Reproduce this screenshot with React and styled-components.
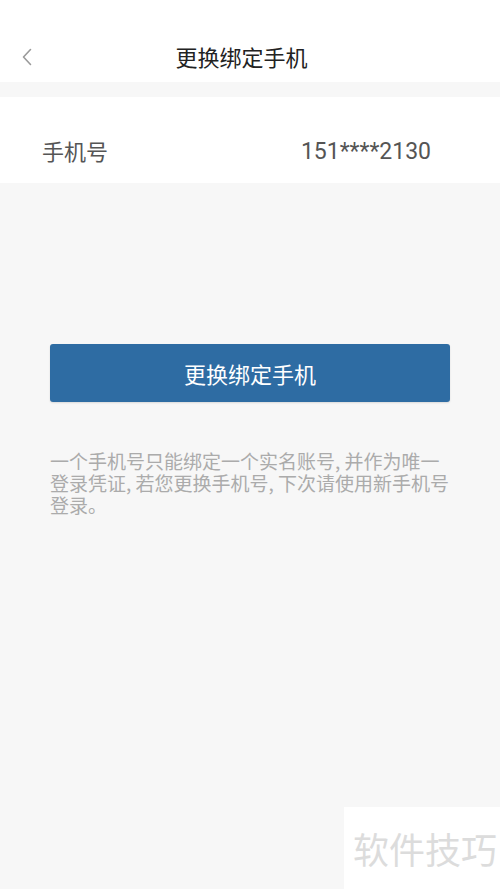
import * as React from 'react';
import styled, { createGlobalStyle } from 'styled-components';

const GlobalStyle = createGlobalStyle`
  html, body {
    margin: 0;
    padding: 0;
    background: #f7f7f7;
  }
  * {
    box-sizing: border-box;
  }
`;

export default function App() {
  return (
    <Page>
      <GlobalStyle />
      <Header>
        <BackButton>
          <svg width="12" height="18" viewBox="0 0 12 18">
            <path d="M9.5 1.5 L2.5 9 L9.5 16.5" fill="none" stroke="#9a9a9a" strokeWidth="1.6" strokeLinecap="round" strokeLinejoin="round" />
          </svg>
        </BackButton>
        <Title>更换绑定手机</Title>
      </Header>
      <Row>
        <Label>手机号</Label>
        <Value>151****2130</Value>
      </Row>
      <Body>
        <PrimaryButton>更换绑定手机</PrimaryButton>
        <Note>
          一个手机号只能绑定一个实名账号, 并作为唯一登录凭证, 若您更换手机号, 下次请使用新手机号登录。
        </Note>
      </Body>
      <Watermark>软件技巧</Watermark>
    </Page>
  );
}

const Page = styled.div`
  position: relative;
  width: 500px;
  min-height: 889px;
  background: #f7f7f7;
  font-family: "Roboto", "Noto Sans CJK SC", sans-serif;
  overflow: hidden;
`;

const Header = styled.div`
  position: relative;
  height: 82px;
  background: #fff;
  display: flex;
  justify-content: center;
  padding: 28px 17px 0 0;
`;

const BackButton = styled.div`
  position: absolute;
  left: 21px;
  top: 48px;
  display: flex;
`;

const Title = styled.div`
  font-size: 22px;
  color: #222;
  font-family: "Noto Sans CJK SC", sans-serif;
  line-height: 1;
  margin-top: 17px;
`;

const Row = styled.div`
  margin-top: 15px;
  height: 86px;
  background: #fff;
  display: flex;
  align-items: flex-start;
  justify-content: space-between;
  padding: 42px 69px 0 42px;
  line-height: 1;
`;

const Label = styled.span`
  font-family: "Noto Sans CJK SC", sans-serif;
  font-size: 22px;
  color: #555;
`;

const Value = styled.span`
  font-family: "Roboto", sans-serif;
  font-size: 23px;
  color: #555;
  margin-top: 1px;
`;

const Body = styled.div`
  padding: 161px 50px 0;
  display: flex;
  flex-direction: column;
`;

const PrimaryButton = styled.div`
  height: 58px;
  border-radius: 3px;
  background: #2e6ca3;
  box-shadow: 0 1px 2px rgba(0, 0, 0, 0.12);
  color: #fff;
  font-family: "Noto Sans CJK SC", sans-serif;
  font-size: 22px;
  display: flex;
  align-items: center;
  justify-content: center;
`;

const Note = styled.p`
  margin: 48px 0 0;
  width: 400px;
  font-family: "Noto Sans CJK SC", sans-serif;
  font-size: 19px;
  line-height: 22px;
  color: #ababab;
`;

const Watermark = styled.div`
  position: absolute;
  right: 0;
  bottom: 0;
  width: 156px;
  height: 82px;
  background: #fff;
  display: flex;
  align-items: center;
  justify-content: flex-end;
  padding-right: 3px;
  font-family: "Noto Sans CJK SC", sans-serif;
  font-size: 36px;
  color: #dcdcdc;
`;
